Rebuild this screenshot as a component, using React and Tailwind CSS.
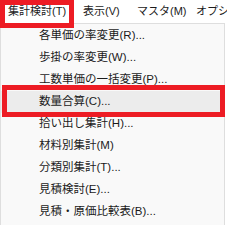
const ITEMS = [
  '各単価の率変更(R)...',
  '歩掛の率変更(W)...',
  '工数単価の一括変更(P)...',
  '数量合算(C)...',
  '拾い出し集計(H)...',
  '材料別集計(M)',
  '分類別集計(T)...',
  '見積検討(E)...',
  '見積・原価比較表(B)...',
]

const MENUS = [
  { label: '集計検討(T)', w: 'w-[75px]' },
  { label: '表示(V)', w: 'w-[54px]' },
  { label: 'マスタ(M)', w: 'w-[59px]' },
  { label: 'オプション(O)', w: 'w-[80px]' },
]

export default function App() {
  return (
    <div
      className="relative w-[227px] h-[225px] overflow-hidden bg-white text-[11.5px] text-[#1b1b1b]"
      style={{ fontFamily: '"Liberation Sans", "Noto Sans CJK JP", sans-serif' }}
    >
      {/* menu bar */}
      <div className="flex h-[23px] items-center whitespace-nowrap text-[11px]">
        {MENUS.map((m) => (
          <div key={m.label} className={`${m.w} shrink-0 pl-[8px] leading-[23px]`}>
            {m.label}
          </div>
        ))}
      </div>

      {/* dropdown */}
      <div className="w-[225px] h-[210px] bg-[#f9f9f9] border border-[#dedede] pt-[1px]">
        {ITEMS.map((t, i) => (
          <div
            key={t}
            className={`flex h-[22px] items-center pl-[38px] whitespace-nowrap ${i === 3 ? 'bg-[#ececec]' : ''}`}
          >
            {t}
          </div>
        ))}
      </div>

      {/* annotation boxes */}
      <div className="absolute left-0 top-0 w-[74px] h-[28px] border-[5px] border-[#ed1c24]" />
      <div className="absolute left-[2px] top-[85px] w-[223px] h-[32px] border-[5px] border-[#ed1c24]" />
    </div>
  )
}
